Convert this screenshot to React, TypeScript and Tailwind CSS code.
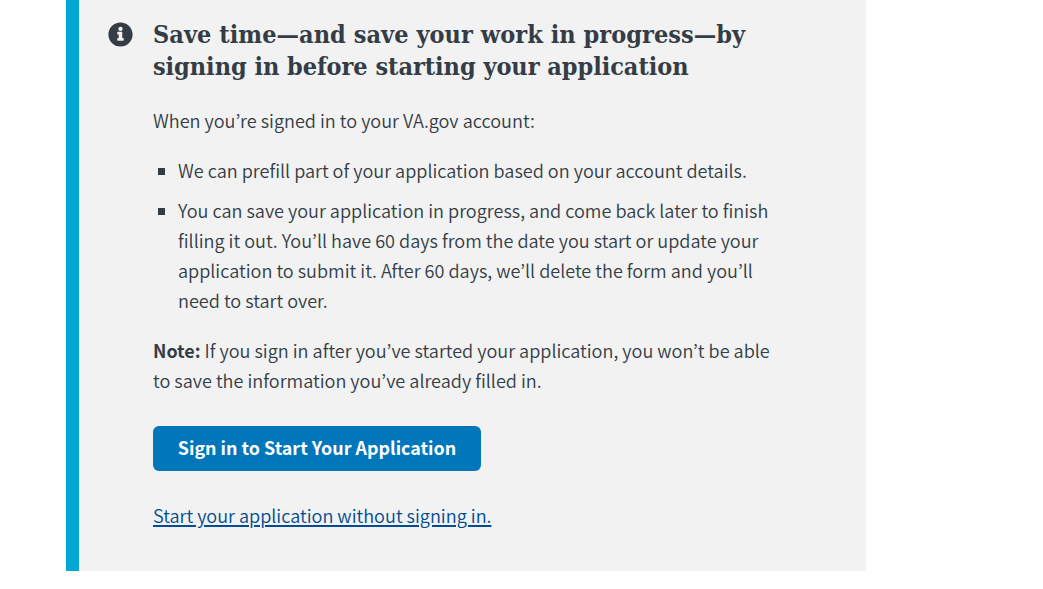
export default function App() {
  return (
    <main className="min-h-screen bg-white">
      <section className="ml-[66px] flex h-[571px] w-[800px] border-l-[13px] border-[#00a9d2] bg-[#f2f2f2] pl-[29px] pt-[18px] font-['Noto_Sans_CJK_KR','Noto_Sans',sans-serif] text-[18.09px] font-[350] leading-[30px] text-[#343d46]">
        <svg viewBox="0 0 512 512" className="mt-1 size-[25px] shrink-0" fill="currentColor" aria-hidden="true">
          <path d="M256 8C119 8 8 119 8 256s111 248 248 248 248-111 248-248S393 8 256 8zm0 90a44 44 0 1 1 0 88 44 44 0 0 1 0-88zm66 272a12 12 0 0 1-12 12H202a12 12 0 0 1-12-12v-28a12 12 0 0 1 12-12h18v-76h-18a12 12 0 0 1-12-12v-28a12 12 0 0 1 12-12h78a12 12 0 0 1 12 12v116h18a12 12 0 0 1 12 12v28z" />
        </svg>
        <div className="ml-5 w-[660px]">
          <h3 className="whitespace-nowrap pt-px font-['DejaVu_Serif_Condensed','DejaVu_Serif',serif] text-[25px] font-bold leading-8 [font-stretch:condensed]">
            <span className="tracking-[0.05px]">Save time—and save your work in progress—by</span><br />
            <span className="tracking-[-0.04px]">signing in before starting your application</span>
          </h3>
          <p className="mt-[22px]">When you’re signed in to your VA.gov account:</p>
          <ul className="mt-5 flex flex-col gap-[10px]">
            <li className="flex">
              <span className="ml-[5px] mr-[13px] mt-[13px] size-[7px] shrink-0 bg-current" />
              <p>We can prefill part of your application based on your account details.</p>
            </li>
            <li className="flex">
              <span className="ml-[5px] mr-[13px] mt-[13px] size-[7px] shrink-0 bg-current" />
              <p>
                You can save your application in progress, and come back later to finish<br />
                filling it out. You’ll have 60 days from the date you start or update your<br />
                application to submit it. After 60 days, we’ll delete the form and you’ll<br />
                need to start over.
              </p>
            </li>
          </ul>
          <p className="mt-5">
            <strong className="text-[17.9px] font-bold">Note:</strong> If you sign in after you’ve started your application, you won’t be able<br />
            to save the information you’ve already filled in.
          </p>
          <button className="mt-[31px] flex h-[45px] w-[328px] items-center justify-center rounded-[6px] bg-[#0076bb] pb-[3px] text-[17.9px] font-bold text-white">
            Sign in to Start Your Application
          </button>
          <p className="mt-[29px]">
            <a href="#" className="text-[#004b91] underline decoration-2 underline-offset-2">Start your application without signing in.</a>
          </p>
        </div>
      </section>
    </main>
  );
}
